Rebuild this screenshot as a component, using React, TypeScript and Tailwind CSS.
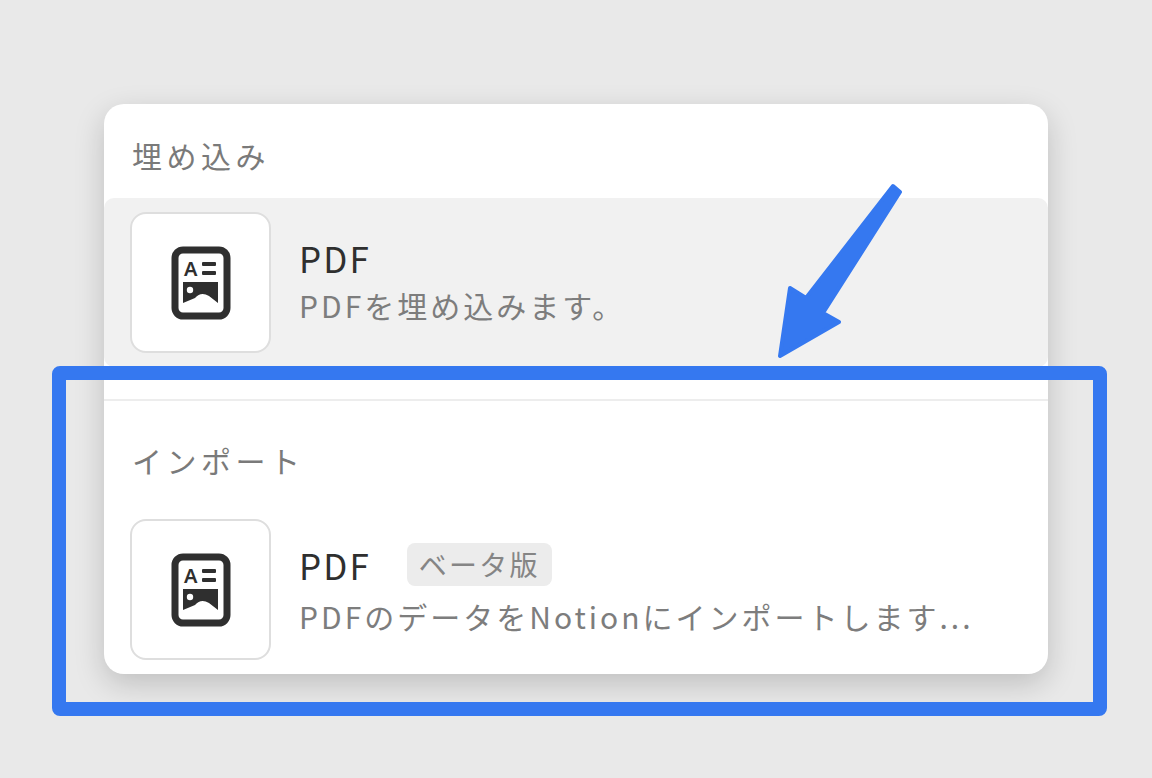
const F = { fontFamily: '"Noto Sans CJK JP","Noto Sans",sans-serif' };

function DocIcon() {
  return (
    <svg width="60" height="74" viewBox="0 0 60 74">
      <rect x="4" y="4" width="52" height="66" rx="8" fill="none" stroke="#2f2f2f" strokeWidth="7" />
      <text x="13" y="30" fontSize="20" fontWeight="600" fill="#2f2f2f" fontFamily="Noto Sans, sans-serif">A</text>
      <rect x="31" y="16" width="14" height="4" rx="1" fill="#2f2f2f" />
      <rect x="31" y="25" width="14" height="4" rx="1" fill="#2f2f2f" />
      <path d="M12 36 H47 V57 L38 50 Q30 45 24 52 L12 57 Z" fill="#2f2f2f" />
      <circle cx="19" cy="44" r="3.2" fill="#fff" />
    </svg>
  );
}

function Row({ desc, badge, active }: { desc: string; badge?: boolean; active?: boolean }) {
  return (
    <div className={`flex items-center gap-[28px] px-[26px] py-[14px] rounded-[10px] ${active ? 'bg-[#f1f1f1]' : ''}`}>
      <div className="w-[141px] h-[141px] rounded-[16px] border-2 border-[#dedede] bg-white flex items-center justify-center shrink-0">
        <DocIcon />
      </div>
      <div className="flex flex-col gap-[12px]">
        <div className="flex items-center gap-[36px]">
          <span className="text-[35px] tracking-[0.06em] text-[#2f2f2f] leading-none" style={F}>PDF</span>
          {badge && <span className="bg-[#ececec] text-[#858585] text-[28px] tracking-[0.08em] rounded-[8px] px-[12px] py-[2px] leading-[1.4]" style={F}>ベータ版</span>}
        </div>
        <span className="text-[30px] tracking-[0.1em] text-[#7d7d7d] leading-tight whitespace-nowrap" style={F}>{desc}</span>
      </div>
    </div>
  );
}

export default function App() {
  return (
    <div className="relative w-[1152px] h-[778px] bg-[#e9e9e9] overflow-hidden" style={F}>
      <div className="absolute left-[104px] top-[104px] w-[944px] h-[570px] bg-white rounded-[20px] shadow-[0_10px_30px_rgba(0,0,0,0.18)] flex flex-col">
        <div className="px-[28px] pt-[36px] pb-[28px] text-[30px] tracking-[0.15em] text-[#7a7a7a] leading-none">埋め込み</div>
        <Row active desc="PDFを埋め込みます。" />
        <div className="mt-[32px] h-[3px] bg-[#ededed]" />
        <div className="px-[28px] pt-[44px] pb-[30px] text-[30px] tracking-[0.15em] text-[#7a7a7a] leading-none">インポート</div>
        <Row badge desc="PDFのデータをNotionにインポートします..." />
      </div>
      <div className="absolute left-[52px] top-[366px] w-[1055px] h-[350px] border-[14px] border-[#3578f0] rounded-[8px]" />
      <svg className="absolute left-0 top-0" width="1152" height="778">
        <polygon points="893,186 900,192 823,313 839,322 780,356 790,288 806,298" fill="#3578f0" stroke="#3578f0" strokeWidth="4" strokeLinejoin="round" />
      </svg>
    </div>
  );
}
